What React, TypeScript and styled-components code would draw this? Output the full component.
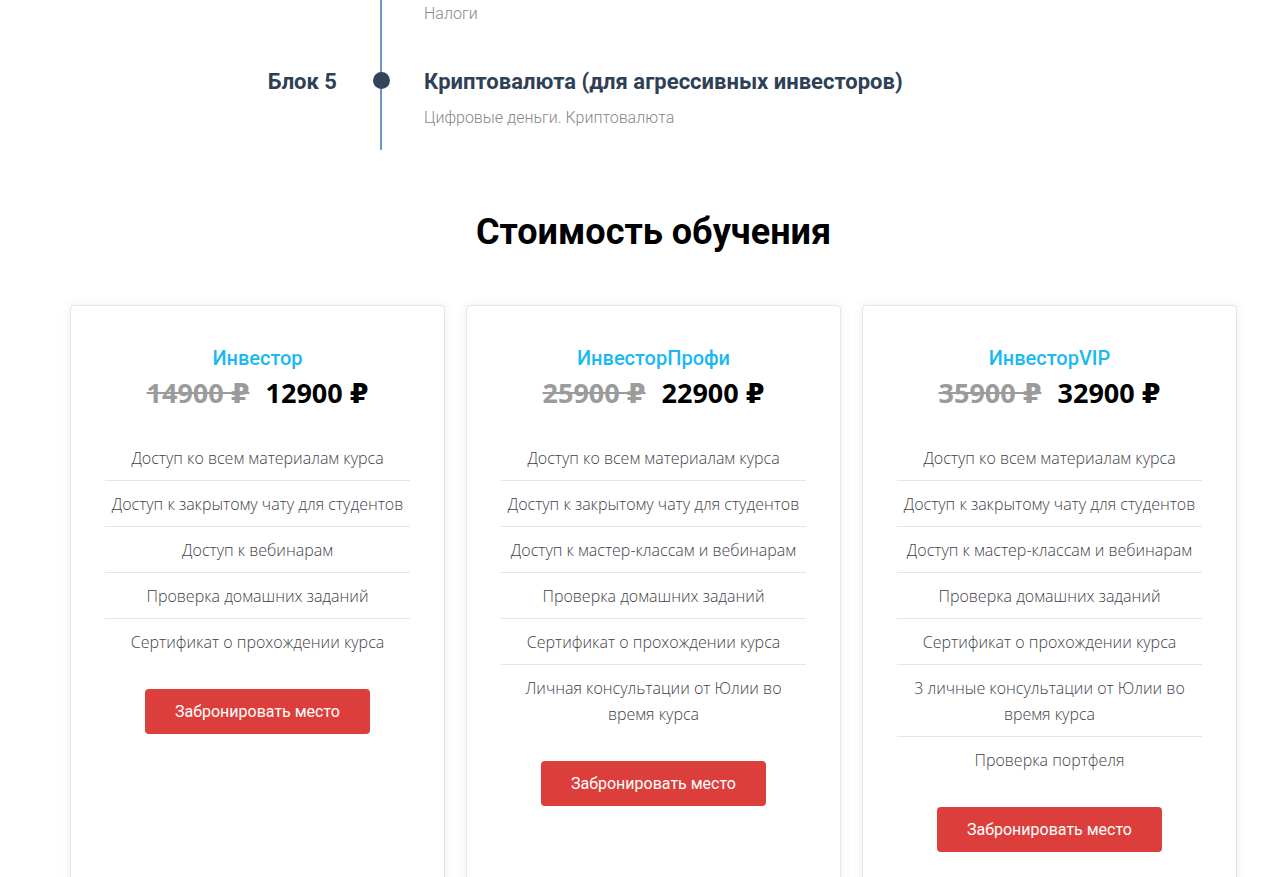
import React from "react";
import styled, { createGlobalStyle } from "styled-components";

const GlobalStyle = createGlobalStyle`
  body {
    margin: 0;
    background: #ffffff;
    font-family: Roboto, "Liberation Sans", sans-serif;
  }
  * {
    box-sizing: border-box;
  }
`;

const Page = styled.div`
  width: 1167px;
  margin-left: 70px;
  padding-bottom: 60px;
`;

const Timeline = styled.div`
  display: flex;
  flex-direction: column;
`;

const Row = styled.div<{ $top: number; $bottom: number }>`
  display: grid;
  grid-template-columns: 267px 87px 1fr;
  padding-top: ${(p) => p.$top}px;
  padding-bottom: ${(p) => p.$bottom}px;
  position: relative;
  &::before {
    content: "";
    position: absolute;
    top: 0;
    bottom: 0;
    left: 310px;
    width: 2px;
    background: #6f94c9;
  }
`;

const BlockLabel = styled.div`
  text-align: right;
  font-size: 22px;
  font-weight: 700;
  line-height: 30px;
  color: #2f3f56;
`;

const DotCell = styled.div`
  position: relative;
  height: 30px;
  &::after {
    content: "";
    position: absolute;
    left: 36px;
    top: 5px;
    width: 17px;
    height: 17px;
    border-radius: 50%;
    background: #33445c;
  }
`;

const BlockBody = styled.div`
  display: flex;
  flex-direction: column;
  gap: 11px;
`;

const BlockTitle = styled.div`
  font-size: 22px;
  font-weight: 700;
  line-height: 30px;
  color: #2f3f56;
`;

const BlockText = styled.div`
  font-size: 16px;
  font-weight: 300;
  line-height: 20px;
  color: #888888;
`;

const Heading = styled.h2`
  margin: 60px 0 51px;
  text-align: center;
  font-size: 36px;
  font-weight: 700;
  line-height: 44px;
  color: #000000;
`;

const Cards = styled.div`
  display: grid;
  grid-template-columns: repeat(3, 375px);
  gap: 21px;
  align-items: stretch;
`;

const Card = styled.div`
  background: #ffffff;
  border: 1px solid #e6e6e6;
  border-radius: 4px;
  box-shadow: 0 0 12px rgba(0, 0, 0, 0.07);
  padding: 40px 34px 120px;
  display: flex;
  flex-direction: column;
  align-items: center;
`;

const PlanName = styled.div`
  font-size: 20px;
  font-weight: 500;
  line-height: 24px;
  color: #1bb9f2;
`;

const Prices = styled.div`
  margin-top: 7px;
  display: flex;
  gap: 16px;
  font-family: "Open Sans", "DejaVu Sans", sans-serif;
  font-size: 27px;
  font-weight: 700;
  line-height: 32px;
`;

const OldPrice = styled.span`
  color: #9b9b9b;
  text-decoration: line-through;
  text-decoration-thickness: 2px;
`;

const NewPrice = styled.span`
  color: #000000;
`;

const Features = styled.ul`
  list-style: none;
  margin: 26px 0 0;
  padding: 0;
  width: 100%;
`;

const Feature = styled.li`
  padding: 10px 6px 9px;
  border-bottom: 1px solid #e4e4ec;
  text-align: center;
  font-family: "Open Sans", "Liberation Sans", sans-serif;
  font-size: 16px;
  font-weight: 300;
  line-height: 26px;
  color: #3f3f4a;
  &:last-child {
    border-bottom: none;
  }
`;

const BookButton = styled.button`
  margin-top: 25px;
  width: 225px;
  height: 45px;
  border: none;
  border-radius: 4px;
  background: #dc3f3b;
  color: #ffffff;
  font-family: Roboto, "Liberation Sans", sans-serif;
  font-size: 16px;
  font-weight: 400;
  cursor: pointer;
`;

const plans = [
  {
    name: "Инвестор",
    old: "14900 ₽",
    price: "12900 ₽",
    features: [
      "Доступ ко всем материалам курса",
      "Доступ к закрытому чату для студентов",
      "Доступ к вебинарам",
      "Проверка домашних заданий",
      "Сертификат о прохождении курса",
    ],
  },
  {
    name: "ИнвесторПрофи",
    old: "25900 ₽",
    price: "22900 ₽",
    features: [
      "Доступ ко всем материалам курса",
      "Доступ к закрытому чату для студентов",
      "Доступ к мастер-классам и вебинарам",
      "Проверка домашних заданий",
      "Сертификат о прохождении курса",
      "Личная консультации от Юлии во время курса",
    ],
  },
  {
    name: "ИнвесторVIP",
    old: "35900 ₽",
    price: "32900 ₽",
    features: [
      "Доступ ко всем материалам курса",
      "Доступ к закрытому чату для студентов",
      "Доступ к мастер-классам и вебинарам",
      "Проверка домашних заданий",
      "Сертификат о прохождении курса",
      "3 личные консультации от Юлии во время курса",
      "Проверка портфеля",
    ],
  },
];

const App: React.FC = () => {
  return (
    <>
      <GlobalStyle />
      <Page>
        <Timeline>
          <Row $top={4} $bottom={43}>
            <div />
            <div />
            <BlockBody>
              <BlockText>Налоги</BlockText>
            </BlockBody>
          </Row>
          <Row $top={0} $bottom={22}>
            <BlockLabel>Блок 5</BlockLabel>
            <DotCell />
            <BlockBody>
              <BlockTitle>Криптовалюта (для агрессивных инвесторов)</BlockTitle>
              <BlockText>Цифровые деньги. Криптовалюта</BlockText>
            </BlockBody>
          </Row>
        </Timeline>

        <Heading>Стоимость обучения</Heading>

        <Cards>
          {plans.map((plan) => (
            <Card key={plan.name}>
              <PlanName>{plan.name}</PlanName>
              <Prices>
                <OldPrice>{plan.old}</OldPrice>
                <NewPrice>{plan.price}</NewPrice>
              </Prices>
              <Features>
                {plan.features.map((f) => (
                  <Feature key={f}>{f}</Feature>
                ))}
              </Features>
              <BookButton>Забронировать место</BookButton>
            </Card>
          ))}
        </Cards>
      </Page>
    </>
  );
};

export default App;
